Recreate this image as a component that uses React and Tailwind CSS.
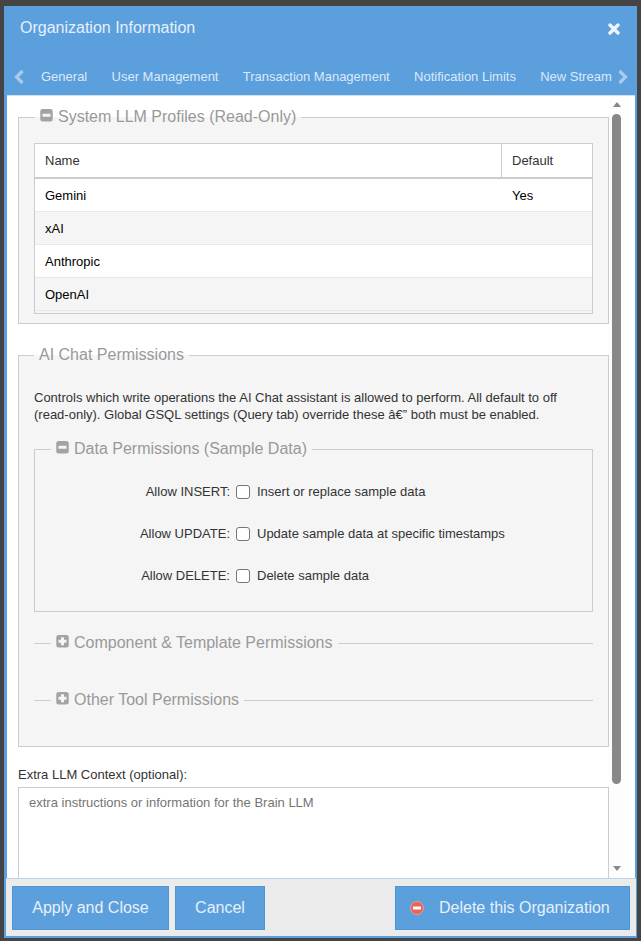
function SquareIcon({ plus }) {
  return (
    <svg width="13" height="13" viewBox="0 0 13 13" className="shrink-0 -translate-y-[2px]">
      <rect x="0.25" y="0" width="12.5" height="12.5" rx="2.5" fill="#a3a3a3" />
      <rect x="2.5" y="4.75" width="8" height="3" fill="#f5f5f5" />
      {plus && <rect x="5" y="2.25" width="3" height="8" fill="#f5f5f5" />}
    </svg>
  )
}

function Chevron({ right }) {
  return (
    <svg width="11" height="16" viewBox="0 0 11 16" className="shrink-0">
      <path d={right ? 'M2.5 2 L8.5 8 L2.5 14' : 'M8.5 2 L2.5 8 L8.5 14'} fill="none" stroke="#a9cbee" strokeWidth="3.2" />
    </svg>
  )
}

function Legend({ icon, plus, children, className }) {
  return (
    <legend className={`flex items-center gap-[5px] px-[5px] text-[16px] leading-[18px] text-[#999] ${className || ''}`}>
      {icon && <SquareIcon plus={plus} />}
      {children}
    </legend>
  )
}

const rows = [
  { name: 'Gemini', def: 'Yes' },
  { name: 'xAI', def: '' },
  { name: 'Anthropic', def: '' },
  { name: 'OpenAI', def: '' },
]

const perms = [
  { label: 'Allow INSERT:', text: 'Insert or replace sample data' },
  { label: 'Allow UPDATE:', text: 'Update sample data at specific timestamps' },
  { label: 'Allow DELETE:', text: 'Delete sample data' },
]

function Button({ className, children }) {
  return (
    <button className={`h-[44px] border border-[#4f94d4] bg-[#5c9fdd] text-[16px] text-[#e6f0fa] ${className}`}>
      {children}
    </button>
  )
}

export default function App() {
  return (
    <div className="h-[941px] w-[641px] overflow-hidden bg-[#444] pt-[6px] pl-[4px] pr-[4px] pb-[3px] font-['Liberation_Sans',Arial,sans-serif]">
      <div className="flex h-[932px] flex-col bg-[#5c9fdd]">
        {/* title */}
        <div className="flex h-[53px] shrink-0 items-start justify-between pl-[16px] pr-[17px] pt-[13px] text-[16px] leading-[18px] text-[#e6f0fa]">
          <span>Organization Information</span>
          <svg width="12" height="12" viewBox="0 0 12 12" className="mt-[4px]">
            <path d="M2 2 L10 10 M10 2 L2 10" stroke="#eef5fc" strokeWidth="3.4" strokeLinecap="round" />
          </svg>
        </div>

        {/* tabs */}
        <div className="flex h-[36px] shrink-0 items-center pl-[10px] text-[13px] text-[#dbe9f7]">
          <Chevron />
          <div className="ml-[16px] flex w-[576px] gap-[24.3px] overflow-hidden whitespace-nowrap pb-[1px]">
            <span>General</span>
            <span>User Management</span>
            <span>Transaction Management</span>
            <span>Notification Limits</span>
            <span>New Stream</span>
          </div>
          <Chevron right />
        </div>

        {/* body */}
        <div className="ml-[3px] mr-[2px] flex h-[783px] shrink-0 overflow-hidden border-t border-[#cfe0f2] bg-white">
          <div className="w-[602px] shrink-0 pl-[11px] pt-[12px] text-[13px] text-[#333]">
            <fieldset className="h-[216px] border border-[#ccc] bg-[#f5f5f5] px-[15px]">
              <Legend icon className="ml-[1px]">System LLM Profiles (Read-Only)</Legend>
              <div className="mt-[17px] border border-[#ccc] bg-white">
                <div className="flex h-[35px] items-center border-b-[2px] border-[#ccc] leading-[33px]">
                  <div className="w-[467px] border-r border-[#ccc] pl-[10px]">Name</div>
                  <div className="pl-[10px]">Default</div>
                </div>
                {rows.map((r, i) => (
                  <div key={r.name} className={`flex h-[33px] items-center border-b border-[#e8e8e8] pt-[2px] text-black ${i % 2 ? 'bg-[#f5f5f5]' : 'bg-white'}`}>
                    <div className="w-[467px] pl-[10px]">{r.name}</div>
                    <div className="pl-[10px]">{r.def}</div>
                  </div>
                ))}
                <div className="h-[2px] bg-[#f5f5f5]" />
              </div>
            </fieldset>

            <fieldset className="mt-[22px] h-[401px] border border-[#ccc] bg-[#f5f5f5] px-[15px]">
              <Legend>AI Chat Permissions</Legend>
              <p className="mt-[25px] leading-[17px]">
                Controls which write operations the AI Chat assistant is allowed to perform. All default to off (read-only). Global GSQL settings (Query tab) override these {'â€\u201d'} both must be enabled.
              </p>

              <fieldset className="mt-[17px] h-[172px] border border-[#ccc]">
                <Legend icon className="ml-[16px]">Data Permissions (Sample Data)</Legend>
                <div className="mt-[25px] flex flex-col gap-[24px]">
                  {perms.map(p => (
                    <label key={p.label} className="flex h-[18px] items-center">
                      <span className="w-[195px] text-right">{p.label}</span>
                      <span className="ml-[6px] h-[14px] w-[14px] rounded-[3px] border border-[#767676] bg-white" />
                      <span className="ml-[7px]">{p.text}</span>
                    </label>
                  ))}
                </div>
              </fieldset>

              <fieldset className="mt-[22px] h-[16px] border-t border-[#ccc]">
                <Legend icon plus className="ml-[17px]">Component &amp; Template Permissions</Legend>
              </fieldset>
              <fieldset className="mt-[39px] h-[16px] border-t border-[#ccc]">
                <Legend icon plus className="ml-[17px]">Other Tool Permissions</Legend>
              </fieldset>
            </fieldset>

            <div className="mt-[20px] leading-[15px]">Extra LLM Context (optional):</div>
            <div className="mt-[5px] h-[120px] border border-[#ccc] bg-white px-[10px] pt-[7px] leading-[15px] text-[#757575]">
              extra instructions or information for the Brain LLM
            </div>
          </div>

          {/* scrollbar */}
          <div className="flex w-[15px] shrink-0 flex-col items-center bg-[#fdfdfd] pt-[6px]">
            <div className="h-0 w-0 border-x-[4px] border-b-[5px] border-x-transparent border-b-[#888]" />
            <div className="mt-[7px] h-[670px] w-[9px] rounded-[5px] bg-[#888]" />
            <div className="mt-[82px] h-0 w-0 border-x-[4px] border-t-[5px] border-x-transparent border-t-[#888]" />
          </div>
        </div>

        {/* footer */}
        <div className="ml-[2px] mr-[1px] flex h-[58px] shrink-0 items-start border-t border-[#b9d3ec] bg-[#ebebeb] px-[6px] pt-[7px]">
          <Button className="w-[157px]">Apply and Close</Button>
          <Button className="ml-[6px] w-[90px]">Cancel</Button>
          <Button className="ml-auto flex w-[235px] items-center pl-[14px]">
            <svg width="14" height="14" viewBox="0 0 14 14" className="shrink-0">
              <circle cx="7" cy="7" r="6.5" fill="#e8645a" stroke="#f09a92" strokeWidth="1" />
              <rect x="3" y="5.5" width="8" height="3" fill="#fff" />
            </svg>
            <span className="ml-[15px]">Delete this Organization</span>
          </Button>
        </div>
      </div>
    </div>
  )
}
